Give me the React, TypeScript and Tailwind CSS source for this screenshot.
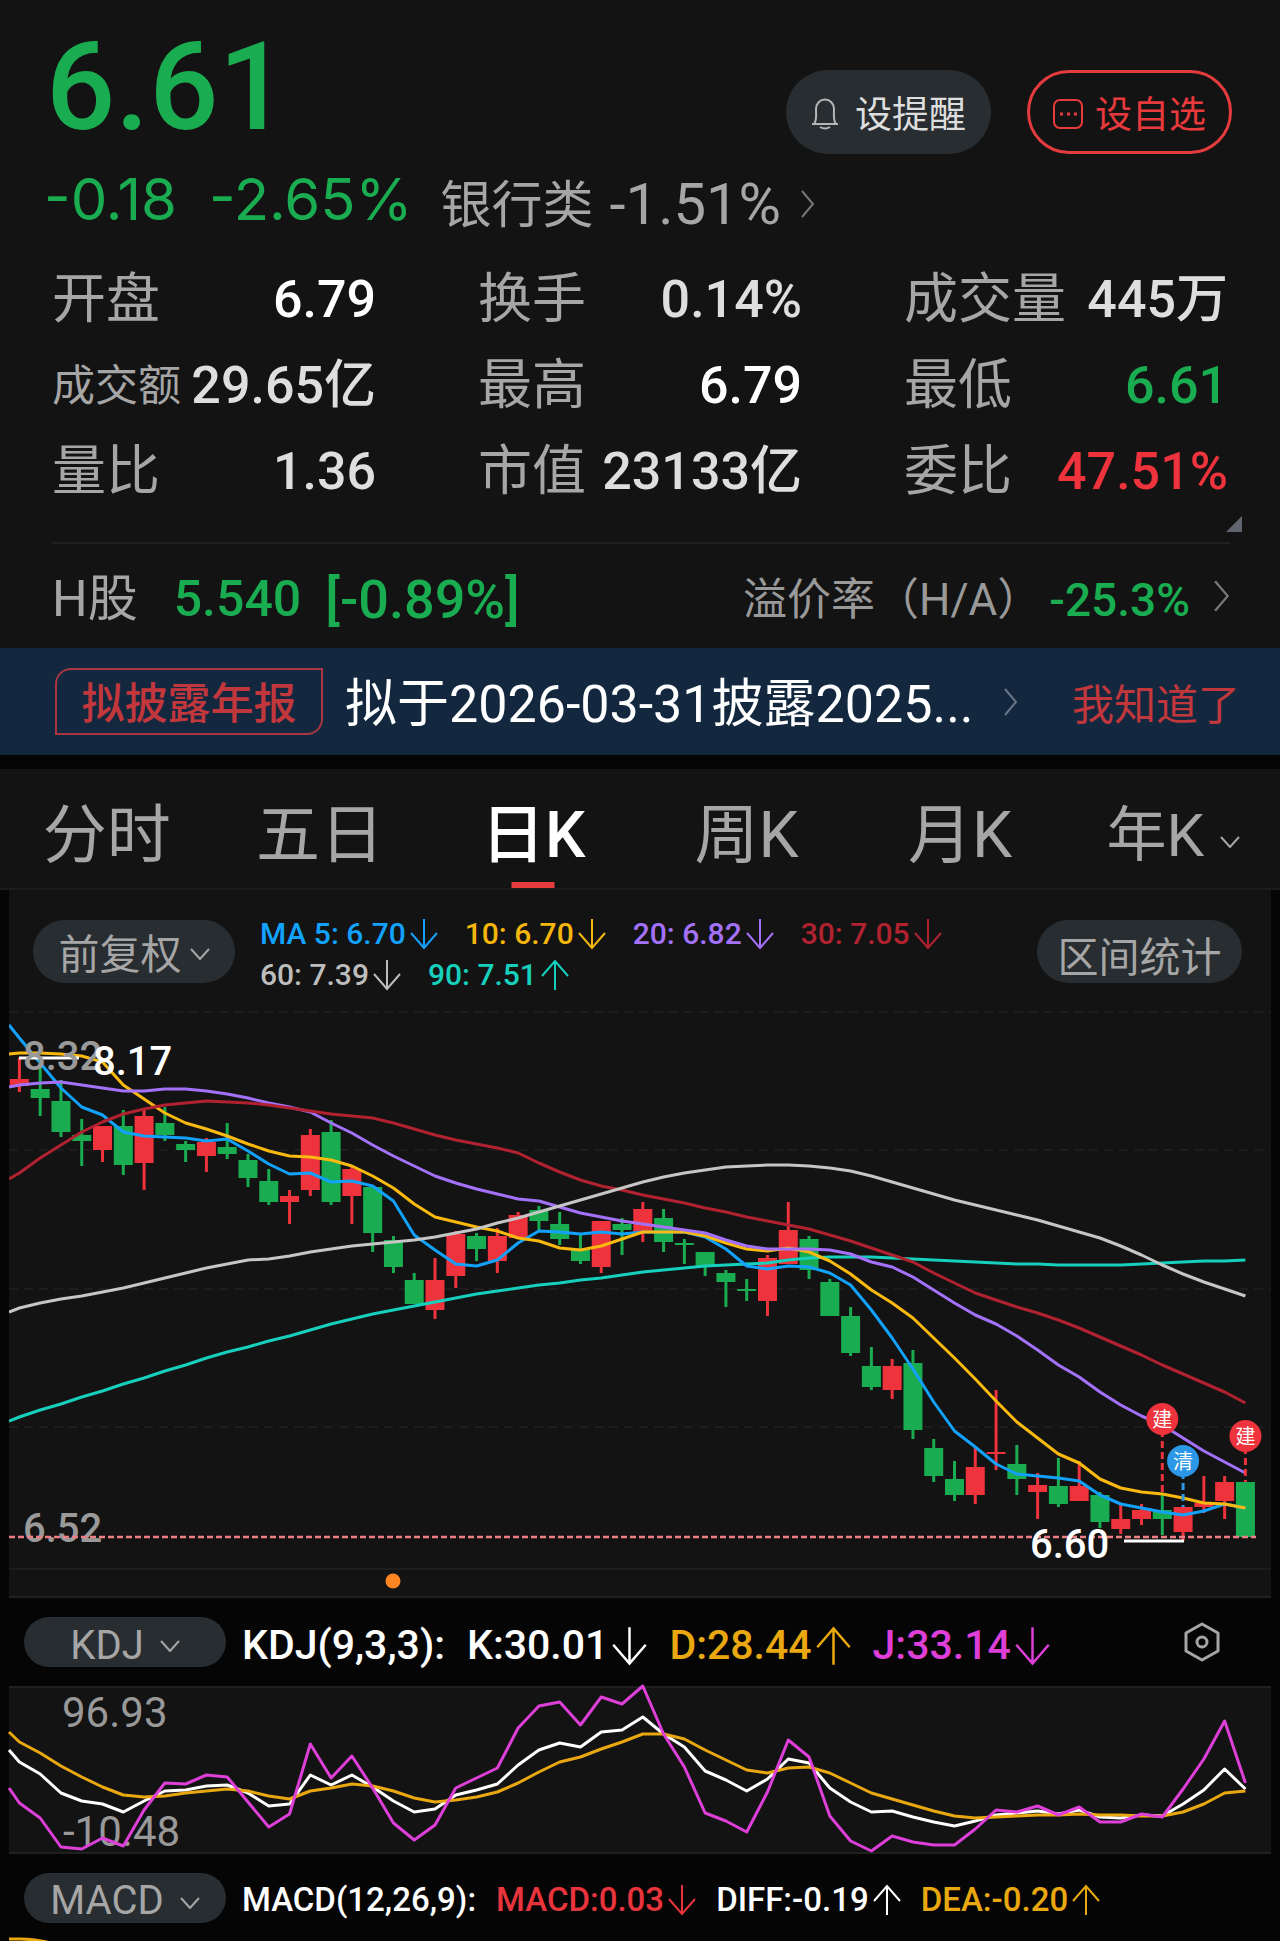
import type { ReactNode } from "react";

type Candle = [high: number, top: number, bottom: number, low: number, up: 0 | 1];

const STEP = 20.78;
const FIRST_X = 19.4;
const LEFT_EDGE = 9;

const RED = "#ee333c";
const GREEN = "#1aac50";

const candles: Candle[] = [
  [1058, 1079, 1086, 1092, 1], [1066, 1089, 1098, 1116, 0], [1080, 1101, 1132, 1137, 0], [1119, 1135, 1141, 1166, 0],
  [1126, 1126, 1150, 1162, 1], [1110, 1126, 1165, 1175, 0], [1110, 1116, 1163, 1190, 1], [1107, 1123, 1135, 1141, 0],
  [1141, 1144, 1150, 1162, 0], [1138, 1142, 1156, 1172, 1], [1123, 1147, 1154, 1159, 0], [1154, 1160, 1178, 1187, 0],
  [1169, 1181, 1202, 1205, 0], [1190, 1196, 1202, 1224, 1], [1129, 1135, 1190, 1196, 1], [1120, 1132, 1202, 1205, 0],
  [1167, 1169, 1196, 1224, 1], [1187, 1187, 1233, 1252, 0], [1236, 1240, 1267, 1273, 0], [1273, 1280, 1304, 1304, 0],
  [1258, 1280, 1310, 1319, 1], [1231, 1234, 1276, 1288, 1], [1233, 1236, 1249, 1261, 0], [1228, 1236, 1261, 1273, 1],
  [1212, 1215, 1238, 1239, 1], [1206, 1210, 1221, 1231, 0], [1212, 1224, 1239, 1245, 0], [1233, 1249, 1261, 1264, 0],
  [1221, 1221, 1267, 1273, 1], [1218, 1224, 1230, 1255, 0], [1202, 1209, 1232, 1242, 1], [1209, 1218, 1242, 1252, 0],
  [1239, 1243, 1245, 1264, 0], [1252, 1252, 1267, 1276, 0], [1270, 1273, 1282, 1307, 0], [1279, 1289, 1291, 1301, 0],
  [1255, 1258, 1301, 1316, 1], [1202, 1230, 1264, 1264, 1], [1236, 1239, 1270, 1279, 0], [1279, 1282, 1316, 1316, 0],
  [1307, 1316, 1353, 1356, 0], [1347, 1366, 1387, 1390, 0], [1359, 1366, 1390, 1399, 1], [1350, 1363, 1430, 1439, 0],
  [1439, 1448, 1476, 1482, 0], [1461, 1479, 1495, 1501, 0], [1448, 1467, 1495, 1504, 1], [1390, 1452, 1454, 1470, 1],
  [1445, 1464, 1479, 1495, 0], [1473, 1485, 1492, 1519, 1], [1458, 1486, 1504, 1507, 0], [1461, 1486, 1501, 1501, 1],
  [1492, 1495, 1522, 1528, 0], [1504, 1519, 1529, 1534, 1], [1504, 1510, 1519, 1525, 1], [1495, 1510, 1519, 1535, 0],
  [1507, 1507, 1532, 1541, 1], [1476, 1503, 1507, 1513, 1], [1476, 1482, 1501, 1519, 1], [1482, 1482, 1537, 1537, 0],
];

// The first value of every series lies on the panel's left edge, the rest on the candles' centres.
const ma5 = [1025, 1038, 1063, 1088, 1107, 1115, 1132, 1136, 1137, 1138, 1141, 1139, 1151, 1164, 1174, 1173, 1182, 1181, 1186, 1201, 1235, 1250, 1264, 1266, 1260, 1243, 1231, 1232, 1234, 1232, 1234, 1232, 1232, 1232, 1237, 1249, 1266, 1269, 1266, 1267, 1273, 1285, 1310, 1338, 1369, 1402, 1431, 1447, 1464, 1474, 1476, 1478, 1481, 1495, 1504, 1508, 1512, 1515, 1511, 1504, 1508];
const ma10 = [1054, 1053, 1053, 1054, 1056, 1062, 1085, 1099, 1113, 1123, 1129, 1136, 1144, 1151, 1156, 1157, 1160, 1166, 1176, 1188, 1204, 1217, 1222, 1227, 1231, 1238, 1241, 1248, 1250, 1246, 1239, 1232, 1232, 1232, 1236, 1243, 1249, 1251, 1248, 1252, 1261, 1274, 1290, 1303, 1318, 1338, 1358, 1379, 1401, 1422, 1438, 1454, 1463, 1479, 1488, 1492, 1494, 1498, 1503, 1504, 1508];
const ma20 = [1087, 1085, 1083, 1082, 1085, 1088, 1091, 1091, 1089, 1089, 1091, 1094, 1098, 1103, 1107, 1112, 1123, 1133, 1145, 1156, 1166, 1176, 1183, 1189, 1194, 1199, 1201, 1207, 1213, 1217, 1221, 1224, 1227, 1230, 1233, 1240, 1246, 1249, 1249, 1249, 1250, 1254, 1262, 1267, 1277, 1290, 1303, 1315, 1324, 1336, 1350, 1365, 1377, 1392, 1405, 1416, 1425, 1438, 1451, 1462, 1473];
const ma30 = [1179, 1173, 1158, 1145, 1132, 1122, 1114, 1109, 1105, 1103, 1101, 1102, 1103, 1105, 1108, 1111, 1114, 1116, 1118, 1123, 1129, 1135, 1140, 1144, 1148, 1153, 1163, 1172, 1180, 1186, 1190, 1195, 1199, 1203, 1208, 1212, 1217, 1221, 1225, 1229, 1235, 1241, 1248, 1255, 1262, 1273, 1283, 1293, 1300, 1307, 1313, 1320, 1328, 1337, 1346, 1355, 1365, 1374, 1383, 1392, 1403];
const ma60 = [1312, 1308, 1303, 1299, 1296, 1292, 1288, 1283, 1278, 1273, 1268, 1264, 1260, 1259, 1256, 1252, 1249, 1246, 1244, 1242, 1240, 1237, 1233, 1229, 1223, 1218, 1212, 1206, 1200, 1194, 1188, 1182, 1177, 1173, 1170, 1167, 1166, 1165, 1165, 1166, 1168, 1171, 1176, 1182, 1188, 1194, 1200, 1205, 1210, 1215, 1220, 1226, 1232, 1238, 1246, 1255, 1265, 1274, 1282, 1289, 1296];
const ma90 = [1421, 1417, 1410, 1404, 1397, 1391, 1384, 1378, 1371, 1365, 1358, 1352, 1347, 1341, 1336, 1330, 1324, 1319, 1314, 1310, 1306, 1302, 1298, 1294, 1291, 1288, 1285, 1283, 1280, 1278, 1275, 1272, 1270, 1268, 1266, 1265, 1264, 1263, 1260, 1258, 1257, 1257, 1257, 1258, 1259, 1260, 1261, 1262, 1263, 1264, 1264, 1265, 1265, 1265, 1265, 1264, 1263, 1262, 1261, 1261, 1260];

const kLine = [1750, 1762, 1774, 1793, 1801, 1804, 1812, 1801, 1791, 1790, 1786, 1785, 1793, 1806, 1804, 1775, 1785, 1775, 1787, 1801, 1812, 1809, 1795, 1790, 1784, 1765, 1750, 1743, 1747, 1732, 1730, 1717, 1734, 1747, 1771, 1780, 1791, 1779, 1759, 1763, 1788, 1802, 1812, 1811, 1817, 1822, 1826, 1821, 1815, 1813, 1811, 1814, 1810, 1817, 1818, 1815, 1816, 1804, 1790, 1769, 1789];
const dLine = [1732, 1742, 1753, 1766, 1777, 1787, 1795, 1797, 1796, 1793, 1791, 1789, 1791, 1796, 1799, 1791, 1788, 1784, 1786, 1791, 1798, 1802, 1800, 1797, 1792, 1783, 1772, 1762, 1757, 1749, 1742, 1734, 1734, 1739, 1750, 1760, 1770, 1773, 1768, 1767, 1773, 1783, 1793, 1799, 1805, 1811, 1816, 1818, 1817, 1816, 1815, 1815, 1814, 1815, 1815, 1816, 1816, 1812, 1804, 1793, 1791];
const jLine = [1788, 1803, 1818, 1847, 1849, 1838, 1846, 1810, 1783, 1784, 1775, 1777, 1802, 1827, 1814, 1744, 1778, 1756, 1788, 1823, 1840, 1825, 1788, 1778, 1768, 1728, 1706, 1702, 1725, 1697, 1704, 1686, 1734, 1767, 1813, 1821, 1832, 1792, 1740, 1757, 1816, 1841, 1851, 1836, 1842, 1845, 1845, 1829, 1810, 1812, 1806, 1815, 1807, 1822, 1822, 1814, 1817, 1789, 1759, 1721, 1783];

const centre = (i: number) => FIRST_X + STEP * i;

function Series({ values, color }: { values: number[]; color: string }) {
  const points = values.map((y, i) => `${i === 0 ? LEFT_EDGE : centre(i - 1)},${y}`).join(" ");
  return <polyline points={points} fill="none" stroke={color} strokeWidth="3" strokeLinejoin="round" />;
}

function Chevron({ className }: { className: string }) {
  return (
    <svg viewBox="0 0 14 28" className={className} fill="none" stroke="currentColor" strokeWidth="2" aria-hidden="true">
      <path d="M1 1 12 14 1 27" />
    </svg>
  );
}

function Down({ className = "" }: { className?: string }) {
  return (
    <svg viewBox="0 0 20 12" className={`h-3 w-5 shrink-0 ${className}`} fill="none" stroke="currentColor" strokeWidth="2" aria-hidden="true">
      <path d="M1 1 10 11 19 1" />
    </svg>
  );
}

function Arrow({ up = false, large = false }: { up?: boolean; large?: boolean }) {
  return (
    <svg
      viewBox="0 0 28 32"
      className={large ? "h-10 w-[35px] shrink-0" : "h-8 w-7 shrink-0"}
      fill="none"
      stroke="currentColor"
      strokeWidth="2"
      aria-hidden="true"
    >
      <path d={up ? "M14 31V2M1 17 14 2 27 17" : "M14 1V30M1 15 14 30 27 15"} />
    </svg>
  );
}

function Marker({ i, y, to, color, text }: { i: number; y: number; to: number; color: string; text: string }) {
  return (
    <g>
      <line x1={centre(i)} x2={centre(i)} y1={y} y2={to} stroke={color} strokeWidth="3" strokeDasharray="7 4" />
      <circle cx={centre(i)} cy={y} r="16" fill={color} />
      <text x={centre(i)} y={y + 8} textAnchor="middle" fontSize="20" fill="#fff">
        {text}
      </text>
    </g>
  );
}

const stats: { label: string; value: string; tone: string; small?: boolean }[] = [
  { label: "开盘", value: "6.79", tone: "text-white" },
  { label: "换手", value: "0.14%", tone: "text-[#dedede]" },
  { label: "成交量", value: "445万", tone: "text-[#dedede]" },
  { label: "成交额", value: "29.65亿", tone: "text-[#dedede]", small: true },
  { label: "最高", value: "6.79", tone: "text-white" },
  { label: "最低", value: "6.61", tone: "text-[#1aac50]" },
  { label: "量比", value: "1.36", tone: "text-[#dedede]" },
  { label: "市值", value: "23133亿", tone: "text-[#dedede]" },
  { label: "委比", value: "47.51%", tone: "text-[#ee333c]" },
];

const tabs = ["分时", "五日", "日K", "周K", "月K", "年K"];

function Reading({ color, up, large, children }: { color: string; up?: boolean; large?: boolean; children: ReactNode }) {
  return (
    <span className={`flex items-center gap-1 ${color}`}>
      {children}
      <Arrow up={up} large={large} />
    </span>
  );
}

export default function App() {
  return (
    <main className="min-h-screen overflow-hidden bg-[#050505] font-['Roboto','Noto_Sans_CJK_SC',sans-serif] whitespace-nowrap text-[#a6a6a6]">
      <section className="bg-[#131313] px-[52px]">
        <div className="flex h-[154px] items-start justify-between pt-[30px]">
          <div className="-ml-1.5 text-[122px] leading-[116px] font-medium text-[#1aac50]">6.61</div>
          <div className="-mr-1 flex gap-9 pt-10">
            <button className="flex h-[84px] w-[205px] items-center justify-center gap-4 rounded-full bg-[#282d31] text-[37px] text-[#dedede]">
              <svg viewBox="0 0 28 32" className="mt-1 h-8 w-7 text-[#b5b5b5]" fill="none" stroke="currentColor" strokeWidth="2" aria-hidden="true">
                <path d="M1 26H27M3 26C6 22 5 18 5 11A9 9.500 0 0 1 23 11C23 18 22 22 25 26M9 29Q14 32 19 29" />
              </svg>
              <span className="pt-2">设提醒</span>
            </button>
            <button className="flex h-[84px] w-[205px] items-center justify-center gap-3 rounded-full border-[3px] border-[#e33b3e] text-[37px] text-[#e8393c]">
              <svg viewBox="0 0 30 30" className="mt-1 size-[30px]" aria-hidden="true">
                <rect x="1" y="1" width="28" height="28" rx="6" fill="none" stroke="currentColor" strokeWidth="2" />
                <path d="M7 15H10M14 15H17M21 15H24" stroke="currentColor" strokeWidth="3" />
              </svg>
              <span className="pt-2">设自选</span>
            </button>
          </div>
        </div>

        <div className="-ml-2 flex h-[100px] items-center">
          <div className="flex gap-8 pb-2.5 font-['Inter','Noto_Sans_CJK_SC',sans-serif] text-[58px] leading-[64px] text-[#1aac50]">
            <span>-0.18</span>
            <span>-2.65%</span>
          </div>
          <a href="#sector" className="ml-7 flex items-center gap-4 leading-[64px]">
            <span className="pt-1 text-[51px]">银行类</span>
            <span className="text-[58px]">-1.51%</span>
            <Chevron className="ml-1 h-7 w-3.5 text-[#777]" />
          </a>
        </div>

        <dl className="grid grid-cols-3 gap-x-[102px]">
          {stats.map((s) => (
            <div key={s.label} className="flex h-[86px] items-center justify-between pt-1.5">
              <dt className={s.small ? "text-[43px] leading-[64px]" : "text-[54px] leading-[64px]"}>{s.label}</dt>
              <dd className={`text-[52px] leading-[64px] font-medium ${s.tone}`}>{s.value}</dd>
            </div>
          ))}
        </dl>
        <div className="-mr-3.5 flex h-[30px] items-end justify-end pb-2.5">
          <svg viewBox="0 0 16 16" className="size-4" aria-hidden="true">
            <path d="M16 0V16H0Z" fill="#60646f" />
          </svg>
        </div>
        <a href="#h-share" className="-mr-0.5 flex h-[106px] items-center border-t-2 border-[#202020] text-[50px]">
          <span className="pt-1.5">H股</span>
          <span className="ml-9 pt-1.5 font-medium text-[#1aac50]">5.540</span>
          <span className="ml-6 pt-1.5 text-[54px] font-medium text-[#1aac50]">[-0.89%]</span>
          <span className="ml-auto pt-2 text-[44px] text-[#999]">溢价率（H/A）</span>
          <span className="ml-2 pt-2 text-[46px] font-medium text-[#1aac50]">-25.3%</span>
          <Chevron className="ml-6 h-8 w-4 text-[#777]" />
        </a>
      </section>

      <section className="flex h-[107px] items-center bg-[#13283f] pr-10 pl-[55px]">
        <span className="flex h-[67px] w-[268px] items-center justify-center rounded-tl-2xl rounded-br-2xl border-2 border-[#a83541] pt-1.5 text-[43px] font-medium text-[#c2373c]">
          拟披露年报
        </span>
        <a href="#report" className="ml-[22px] flex min-w-0 flex-1 items-center text-[52px] leading-[64px] text-white">
          <span className="truncate pt-1.5">拟于2026-03-31披露2025...</span>
          <Chevron className="ml-[30px] h-7 w-3.5 shrink-0 text-[#687484]" />
        </a>
        <button className="pt-2 text-[42px] text-[#c2373c]">我知道了</button>
      </section>

      <nav className="mt-3.5 grid h-[121px] grid-cols-6 border-b-2 border-[#1b1b1b] bg-[#131313]">
        {tabs.map((t, i) => (
          <button
            key={t}
            className={`relative flex items-center justify-center pt-3.5 leading-[72px] ${i === 2 ? "font-medium text-white" : ""} ${i === 5 ? "gap-4 text-[60px]" : "text-[64px]"}`}
          >
            {t}
            {i === 5 && <Down className="mt-3" />}
            {i === 2 && <span className="absolute bottom-0 left-1/2 h-1.5 w-[43px] -translate-x-1/2 bg-[#e63c3f]" />}
          </button>
        ))}
      </nav>

      <section className="mx-[9px] border-b-2 border-[#1f1f1f] bg-[#131313]">
        <div className="flex h-[114px] items-start pt-[30px] pr-[29px] pl-6">
          <button className="flex h-[63px] w-[202px] shrink-0 items-center justify-center gap-2 rounded-full bg-[#282d31] text-[41px]">
            <span className="pt-2">前复权</span>
            <Down className="mt-1" />
          </button>
          <div className="-mt-[7px] ml-[25px] flex flex-1 flex-wrap gap-x-[27px] text-[30px] leading-[41px] font-medium">
            <Reading color="text-[#12a1fb]">MA 5: 6.70</Reading>
            <Reading color="text-[#f5b70c]">10: 6.70</Reading>
            <Reading color="text-[#a472fa]">20: 6.82</Reading>
            <Reading color="text-[#b0222f]">30: 7.05</Reading>
            <Reading color="text-[#bdbdbd]">60: 7.39</Reading>
            <Reading color="text-[#16d0bd]" up>90: 7.51</Reading>
          </div>
          <button className="h-[63px] w-[205px] shrink-0 rounded-full bg-[#282d31] pt-2 text-[41px]">区间统计</button>
        </div>
        <svg viewBox="9 1004 1262 592" className="block h-auto w-full" role="img" aria-label="日K">
          {[1012, 1150, 1289, 1427].map((y) => (
            <line key={y} x1="9" x2="1271" y1={y} y2={y} stroke="#1d1d1d" strokeWidth="2" strokeDasharray="9 6" />
          ))}
          <line x1="9" x2="1271" y1="1569" y2="1569" stroke="#1d1d1d" strokeWidth="2" />
          {candles.map(([high, top, bottom, low, up], i) => (
            <g key={i} fill={up ? RED : GREEN}>
              <rect x={centre(i) - 1.5} y={high} width="3" height={low - high} />
              <rect x={centre(i) - 9.5} y={top} width="19" height={bottom - top} />
            </g>
          ))}
          <Series values={ma90} color="#16d0bd" />
          <Series values={ma5} color="#12a1fb" />
          <Series values={ma10} color="#f9b90f" />
          <Series values={ma20} color="#a472fa" />
          <Series values={ma30} color="#b0222f" />
          <Series values={ma60} color="#c6c6c6" />
          <path d="M19 1058H79M1124 1541H1184" stroke="#fff" strokeWidth="3" />
          <g fontSize="40" fontWeight="500" fill="#999">
            <text x="23" y="1070">8.32</text>
            <text x="23" y="1542">6.52</text>
          </g>
          <line x1="9" x2="1256" y1="1537" y2="1537" stroke="#ef7f86" strokeWidth="2.5" strokeDasharray="6 3" />
          <g fontSize="40" fontWeight="500" fill="#fff">
            <text x="93" y="1075">8.17</text>
            <text x="1030" y="1558">6.60</text>
          </g>
          <Marker i={55} y={1419} to={1495} color="#ee333c" text="建" />
          <Marker i={56} y={1461} to={1507} color="#2b97e6" text="清" />
          <Marker i={59} y={1436} to={1482} color="#ee333c" text="建" />
          <circle cx="393" cy="1581" r="7.500" fill="#ff8523" />
        </svg>
      </section>

      <section className="flex h-[88px] items-center pr-[60px] pl-6 text-[41px]">
        <button className="flex h-[50px] w-[202px] shrink-0 items-center justify-center gap-4 rounded-full bg-[#282d31] pt-2 text-[40px] leading-[50px]">
          KDJ
          <Down />
        </button>
        <div className="ml-4 flex items-center gap-[22px] pt-2 font-medium text-white">
          <span>KDJ(9,3,3):</span>
          <Reading color="text-white" large>K:30.01</Reading>
          <Reading color="text-[#e9a80f]" up large>D:28.44</Reading>
          <Reading color="text-[#dd3fd8]" large>J:33.14</Reading>
        </div>
        <button aria-label="设置" className="ml-auto">
          <svg viewBox="0 0 36 40" className="h-10 w-9" fill="none" stroke="currentColor" strokeWidth="3" strokeLinejoin="round" aria-hidden="true">
            <path d="M18 2 34 11V29L18 38 2 29V11Z" />
            <circle cx="18" cy="20" r="5" />
          </svg>
        </button>
      </section>

      <section className="mx-[9px] border-y-2 border-[#1f1f1f] bg-[#131313]">
        <svg viewBox="9 1688 1262 164" className="block h-auto w-full overflow-visible" role="img" aria-label="KDJ">
          <g fontSize="42" fill="#999">
            <text x="62" y="1727">96.93</text>
            <text x="63" y="1846">-10.48</text>
          </g>
          <Series values={kLine} color="#fff" />
          <Series values={dLine} color="#e9a80f" />
          <Series values={jLine} color="#dd3fd8" />
        </svg>
      </section>

      <section className="relative flex h-[88px] items-center px-6 text-[33px]">
        <button className="flex h-[50px] w-[202px] shrink-0 items-center justify-center gap-4 rounded-full bg-[#282d31] pt-1.5 text-[40px] leading-[50px]">
          MACD
          <Down className="mt-1" />
        </button>
        <div className="ml-4 flex items-center gap-5 pt-1 font-medium text-white">
          <span>MACD(12,26,9):</span>
          <Reading color="text-[#e8343c]">MACD:0.03</Reading>
          <Reading color="text-white" up>DIFF:-0.19</Reading>
          <Reading color="text-[#e9a80f]" up>DEA:-0.20</Reading>
        </div>
        <svg viewBox="0 0 44 5" className="absolute bottom-0 left-[9px] h-[5px] w-11" fill="none" stroke="#e9a80f" strokeWidth="3" aria-hidden="true">
          <path d="M0 2H12Q25 2 42 6" />
        </svg>
      </section>
    </main>
  );
}
